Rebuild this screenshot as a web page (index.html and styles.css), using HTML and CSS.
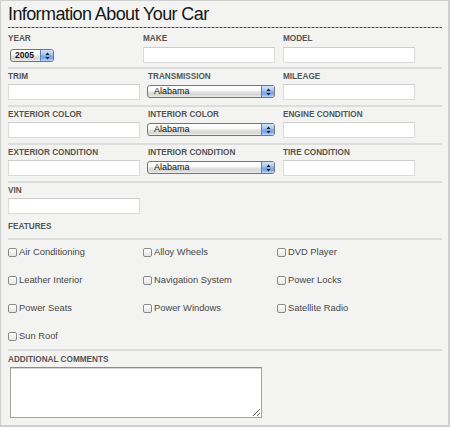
FILE: index.html
```html
<!DOCTYPE html>
<html>
<head>
<meta charset="utf-8">
<link rel="stylesheet" href="styles.css">
</head>
<body>
<form class="form">
  <h1 class="title">Information About Your Car</h1>

  <div class="row row-first">
    <div class="field">
      <label class="lbl">Year</label>
      <div class="select select-year"><span class="select-text">2005</span><span class="select-btn"><svg width="5" height="8" viewBox="0 0 5 8"><path d="M2.5 0.5 L4.6 3 L0.4 3 Z M2.5 7.5 L4.6 5 L0.4 5 Z" fill="#222"/></svg></span></div>
    </div>
    <div class="field">
      <label class="lbl">Make</label>
      <input class="text" type="text">
    </div>
    <div class="field">
      <label class="lbl">Model</label>
      <input class="text" type="text">
    </div>
  </div>

  <div class="row">
    <div class="field">
      <label class="lbl">Trim</label>
      <input class="text" type="text">
    </div>
    <div class="field field-select">
      <label class="lbl">Transmission</label>
      <div class="select select-wide"><span class="select-text">Alabama</span><span class="select-btn"><svg width="5" height="8" viewBox="0 0 5 8"><path d="M2.5 0.5 L4.6 3 L0.4 3 Z M2.5 7.5 L4.6 5 L0.4 5 Z" fill="#222"/></svg></span></div>
    </div>
    <div class="field">
      <label class="lbl">Mileage</label>
      <input class="text" type="text">
    </div>
  </div>

  <div class="row">
    <div class="field">
      <label class="lbl">Exterior Color</label>
      <input class="text" type="text">
    </div>
    <div class="field field-select">
      <label class="lbl">Interior Color</label>
      <div class="select select-wide"><span class="select-text">Alabama</span><span class="select-btn"><svg width="5" height="8" viewBox="0 0 5 8"><path d="M2.5 0.5 L4.6 3 L0.4 3 Z M2.5 7.5 L4.6 5 L0.4 5 Z" fill="#222"/></svg></span></div>
    </div>
    <div class="field">
      <label class="lbl">Engine Condition</label>
      <input class="text" type="text">
    </div>
  </div>

  <div class="row">
    <div class="field">
      <label class="lbl">Exterior Condition</label>
      <input class="text" type="text">
    </div>
    <div class="field field-select">
      <label class="lbl">Interior Condition</label>
      <div class="select select-wide"><span class="select-text">Alabama</span><span class="select-btn"><svg width="5" height="8" viewBox="0 0 5 8"><path d="M2.5 0.5 L4.6 3 L0.4 3 Z M2.5 7.5 L4.6 5 L0.4 5 Z" fill="#222"/></svg></span></div>
    </div>
    <div class="field">
      <label class="lbl">Tire Condition</label>
      <input class="text" type="text">
    </div>
  </div>

  <div class="row row-last">
    <div class="field">
      <label class="lbl">VIN</label>
      <input class="text" type="text">
    </div>
  </div>

  <div class="features-head">
    <span class="lbl">Features</span>
  </div>

  <div class="features">
    <label class="check"><span class="box"></span>Air Conditioning</label>
    <label class="check"><span class="box"></span>Alloy Wheels</label>
    <label class="check"><span class="box"></span>DVD Player</label>
    <label class="check"><span class="box"></span>Leather Interior</label>
    <label class="check"><span class="box"></span>Navigation System</label>
    <label class="check"><span class="box"></span>Power Locks</label>
    <label class="check"><span class="box"></span>Power Seats</label>
    <label class="check"><span class="box"></span>Power Windows</label>
    <label class="check"><span class="box"></span>Satellite Radio</label>
    <label class="check"><span class="box"></span>Sun Roof</label>
  </div>

  <div class="comments">
    <label class="lbl">Additional Comments</label>
    <textarea class="area"></textarea>
  </div>
</form>
</body>
</html>
```

FILE: styles.css
```css
* { box-sizing: border-box; }

html, body {
  margin: 0;
  padding: 0;
  background: #fff;
}

.form {
  width: 450px;
  height: 427px;
  margin: 0;
  padding: 0 6px 0 7px;
  background: #f3f4f1;
  border-style: solid;
  border-color: #cfcfcd;
  border-width: 1px 2px 2px 1px;
  font-family: "Liberation Sans", Arial, sans-serif;
  display: flex;
  flex-direction: column;
}

.title {
  margin: 0;
  padding: 3px 0 4px;
  font-size: 18px;
  line-height: 20px;
  font-weight: normal;
  letter-spacing: -0.6px;
  color: #161616;
  background-image: repeating-linear-gradient(to right, #4a4a4a 0 2px, #a5a5a5 2px 4px);
  background-size: 100% 1px;
  background-repeat: no-repeat;
  background-position: left bottom;
}

.lbl {
  display: block;
  font-size: 8.2px;
  line-height: 10px;
  height: 10px;
  font-weight: bold;
  text-transform: uppercase;
  color: #555;
  white-space: nowrap;
}

.row {
  display: grid;
  grid-template-columns: 135px 140px 132px;
  padding: 3px 0 5px;
  border-bottom: 2px solid #dddddb;
}

.row-first {
  padding: 6px 0 4px;
}
.row-first .lbl { margin-bottom: 3px; }

.row-last {
  border-bottom: none;
  padding-bottom: 0;
}

.field {
  display: flex;
  flex-direction: column;
  gap: 2px;
}
.row-first .field { gap: 0; }

.field-select {
  padding-left: 4px;
}
.field-select .lbl { margin-left: 1px; }

.text {
  width: 132px;
  height: 16px;
  margin: 0;
  padding: 0 3px;
  background: #fff;
  border: 1px solid #dadada;
  border-top-color: #cdcdcd;
  border-radius: 0;
  outline: none;
  font-family: inherit;
  font-size: 9px;
}

.select {
  display: flex;
  align-items: stretch;
  height: 13px;
  border: 1px solid #767676;
  border-radius: 3px;
  background: linear-gradient(#ffffff, #fafafa 40%, #e2e2e2 55%, #d6d6d6 80%, #eeeeee);
  overflow: hidden;
}

.select-year {
  width: 44px;
  margin: 2px 0 0 2px;
}

.select-wide {
  width: 128px;
  margin-top: 1px;
}

.select-text {
  flex: 1;
  padding-left: 6px;
  font-size: 9px;
  line-height: 11px;
  color: #111;
}
.select-year .select-text { padding-left: 4px; font-weight: bold; font-size: 8.5px; }

.select-btn {
  width: 13px;
  display: flex;
  align-items: center;
  justify-content: center;
  border-left: 1px solid #5f82b8;
  background: linear-gradient(#d3e4fa, #a9c8f2 40%, #78a6e6 55%, #86b0ec 80%, #c0d8f7);
}

.features-head {
  padding: 8px 0 6px;
  border-bottom: 2px solid #dddddb;
}

.features {
  display: grid;
  grid-template-columns: 135px 134px 1fr;
  row-gap: 18px;
  padding: 7px 0 8px;
  border-bottom: 2px solid #dddddb;
}

.check {
  display: flex;
  align-items: center;
  gap: 2px;
  height: 10px;
  font-size: 9.35px;
  line-height: 10px;
  color: #484848;
  white-space: nowrap;
}

.box {
  width: 9px;
  height: 9px;
  border: 1px solid #8a8a8a;
  border-radius: 2px;
  background: linear-gradient(#ffffff, #e6e6e6);
  flex: none;
}

.comments {
  padding: 4px 0 0;
  display: flex;
  flex-direction: column;
  gap: 2px;
}

.area {
  width: 252px;
  height: 51px;
  margin: 0 0 0 2px;
  padding: 2px;
  background: #fff;
  border: 1px solid #a3a3a3;
  border-top-color: #8c8c8c;
  box-shadow: inset 0 1px 0 #d6d6d6;
  border-radius: 0;
  outline: none;
  font-family: inherit;
  font-size: 9px;
}
```
